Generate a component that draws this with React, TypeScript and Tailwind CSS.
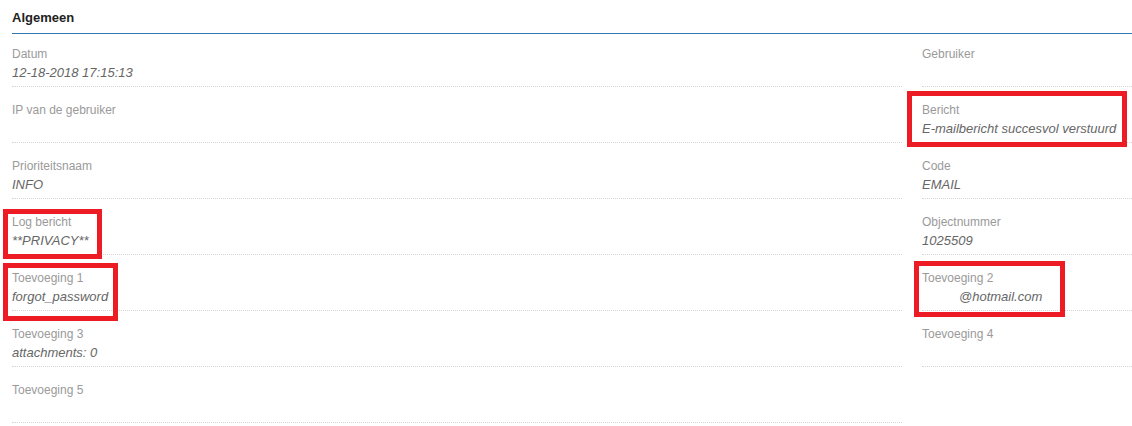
import React from 'react';

interface FieldProps {
  label: string;
  value?: string;
  indent?: boolean;
}

const Field: React.FC<FieldProps> = ({ label, value, indent }) => (
  <div className="h-[56px] pt-[14px] border-b border-dotted border-[#d6d6d6] box-border">
    <div className="text-[12px] leading-[18px] text-[#9a9a9a]">{label}</div>
    <div className={`h-[20px] text-[13px] leading-[20px] italic text-[#666] ${indent ? 'pl-[37px]' : ''}`}>
      {value}
    </div>
  </div>
);

const leftFields: FieldProps[] = [
  { label: 'Datum', value: '12-18-2018 17:15:13' },
  { label: 'IP van de gebruiker' },
  { label: 'Prioriteitsnaam', value: 'INFO' },
  { label: 'Log bericht', value: '**PRIVACY**' },
  { label: 'Toevoeging 1', value: 'forgot_password' },
  { label: 'Toevoeging 3', value: 'attachments: 0' },
  { label: 'Toevoeging 5' },
];

const rightFields: FieldProps[] = [
  { label: 'Gebruiker' },
  { label: 'Bericht', value: 'E-mailbericht succesvol verstuurd' },
  { label: 'Code', value: 'EMAIL' },
  { label: 'Objectnummer', value: '1025509' },
  { label: 'Toevoeging 2', value: '@hotmail.com', indent: true },
  { label: 'Toevoeging 4' },
];

export default function App() {
  return (
    <div className="relative w-[1132px] h-[426px] bg-white pl-[12px] font-['Liberation_Sans',Arial,sans-serif]">
      {/* Section header */}
      <div className="pt-[9px] pb-[6px] border-b border-[#2f7ab5]">
        <h2 className="text-[13px] leading-[18px] font-bold text-[#222]">Algemeen</h2>
      </div>

      {/* Fields */}
      <div className="flex gap-[20px] -mt-[3px]">
        <div className="flex flex-col w-[890px]">
          {leftFields.map((f) => (
            <Field key={f.label} {...f} />
          ))}
        </div>
        <div className="flex flex-col flex-1">
          {rightFields.map((f) => (
            <Field key={f.label} {...f} />
          ))}
        </div>
      </div>

      {/* Red annotation boxes */}
      <div className="absolute left-[3px] top-[209px] w-[99px] h-[50px] border-[5px] border-[#ed1c24]" />
      <div className="absolute left-[3px] top-[263px] w-[115px] h-[58px] border-[5px] border-[#ed1c24]" />
      <div className="absolute left-[907px] top-[91px] w-[220px] h-[56px] border-[5px] border-[#ed1c24]" />
      <div className="absolute left-[914px] top-[261px] w-[151px] h-[56px] border-[5px] border-[#ed1c24]" />
    </div>
  );
}
